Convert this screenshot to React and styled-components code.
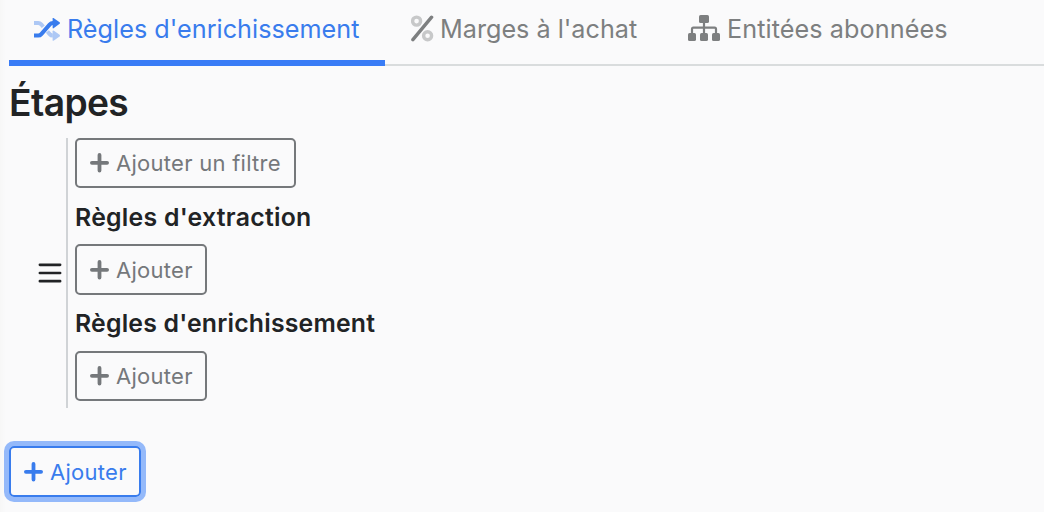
import React from 'react';
import styled, { createGlobalStyle, css } from 'styled-components';

const GlobalStyle = createGlobalStyle`
  *, *::before, *::after { box-sizing: border-box; }
  body {
    margin: 0;
    background: #fafafb;
    color: #212325;
    font-family: Inter, "Liberation Sans", sans-serif;
    -webkit-font-smoothing: antialiased;
  }
`;

const Page = styled.main`
  height: 512px;
  overflow: hidden;
  padding-left: 9px;
  background: linear-gradient(to right, #f7f7f7 0, #fafafb 6px);
`;

const Tabs = styled.nav`
  display: flex;
  height: 66px;
  box-shadow: inset 0 -2px 0 #d9dcdd;
`;

const Tab = styled.a`
  display: flex;
  align-items: center;
  gap: ${(p) => p.$gap}px;
  width: ${(p) => p.$width}px;
  padding: 0 0 2px ${(p) => p.$start}px;
  border-bottom: 6px solid ${(p) => (p.$active ? '#397cf6' : 'transparent')};
  color: ${(p) => (p.$active ? '#397ced' : '#7d7f80')};
  font-size: 25.2px;
  letter-spacing: ${(p) => p.$tracking || 0}px;
  line-height: 38px;
  white-space: nowrap;
`;

const Icon = styled.svg`
  display: block;
  flex: none;
  fill: currentColor;
`;

const TabIcon = styled(Icon)`
  margin-bottom: 2px;
`;

const Title = styled.h2`
  margin: 13px 0 11px;
  font-size: 37.2px;
  font-weight: 600;
  letter-spacing: -0.6px;
  line-height: 48px;
`;

const Step = styled.section`
  display: flex;
  align-items: center;
  height: 270px;
`;

const Handle = styled.span`
  width: 57px;
  padding: 0 0 0 29px;
`;

const StepBody = styled.div`
  display: flex;
  flex-direction: column;
  align-items: flex-start;
  align-self: stretch;
  padding-left: 7px;
  border-left: 2px solid #d0d3d6;
`;

const SubTitle = styled.h5`
  margin: 0;
  padding: ${(p) => (p.$low ? '14px 0 11px' : '13px 0 12px')};
  font-size: 24.8px;
  font-weight: 600;
  letter-spacing: ${(p) => p.$tracking}px;
  line-height: 31px;
  white-space: nowrap;
`;

const Button = styled.button`
  display: flex;
  align-items: center;
  gap: 7px;
  width: ${(p) => p.$width || 132}px;
  height: ${(p) => p.$height || 50}px;
  flex: none;
  padding: 0 0 0 13px;
  border: 2px solid currentColor;
  border-radius: 5px;
  background: transparent;
  color: #75787b;
  font: 400 22px/30px Inter, "Liberation Sans", sans-serif;
  letter-spacing: 0.27px;
  white-space: nowrap;
  ${(p) => p.$primary && css`
    margin-top: 38px;
    color: #397ced;
    box-shadow: 0 0 0 5px #94b9fa;
  `}
`;

const ShuffleIcon = () => (
  <Icon width="26" height="23" viewBox="0 0 26 23">
    <g fill="none" stroke="currentColor" strokeWidth="4">
      <path opacity=".4" d="M0 5H4.2Q6 5 7.2 6.3L9.3 8.7M13.4 13.5L15.7 16.1Q17 17.6 18.6 17.6" />
      <path d="M0 17.6H4.2Q6 17.6 7.3 16.1L15.6 6.6Q17 5 19 5H21" />
    </g>
    <path d="M18.6 .7Q18.6-.7 19.9 .2L25.6 4.2Q26.4 5 25.6 5.8L19.9 10.1Q18.6 10.9 18.6 9.5Z" />
    <path opacity=".4" d="M18.6 13.3Q18.6 11.9 19.9 12.7L25.6 16.8Q26.4 17.6 25.6 18.4L19.9 22.5Q18.6 23.3 18.6 21.9Z" />
  </Icon>
);

const PercentIcon = () => (
  <TabIcon width="23" height="27" viewBox="0 0 23 27">
    <g fill="none" stroke="currentColor">
      <g opacity=".4" strokeWidth="3.4">
        <circle cx="5.6" cy="6.1" r="4" />
        <circle cx="16.6" cy="20.7" r="4" />
      </g>
      <path d="M1.9 24.6L20.6 2.2" strokeWidth="3.4" strokeLinecap="round" />
    </g>
  </TabIcon>
);

const SitemapIcon = () => (
  <TabIcon width="32" height="26" viewBox="0 0 32 26">
    <rect x="11" width="10" height="8" rx="1.6" />
    <rect y="18" width="8" height="8" rx="1.6" />
    <rect x="12" y="18" width="8" height="8" rx="1.6" />
    <rect x="24" y="18" width="8" height="8" rx="1.6" />
    <path d="M16 7V18M4 18V14Q4 12.6 5.4 12.6H26.6Q28 12.6 28 14V18" fill="none" stroke="currentColor" strokeWidth="2.2" />
  </TabIcon>
);

const PlusIcon = () => (
  <Icon width="19" height="20" viewBox="0 0 19 20">
    <path d="M9.5 2V17.6M1.9 9.8H17.1" stroke="currentColor" strokeWidth="3.8" strokeLinecap="round" />
  </Icon>
);

const BurgerIcon = () => (
  <Icon width="24" height="20" viewBox="0 0 24 20">
    <path d="M1.9 1.8H22.1M1.9 10H22.1M1.9 18.2H22.1" stroke="currentColor" strokeWidth="2.7" strokeLinecap="round" />
  </Icon>
);

const AddButton = ({ children = 'Ajouter', ...props }) => (
  <Button type="button" {...props}>
    <PlusIcon />
    <span>{children}</span>
  </Button>
);

export default function App() {
  return (
    <>
      <GlobalStyle />
      <Page>
        <Tabs>
          <Tab $active $width={376} $start={25} $gap={7} $tracking={0.03}>
            <ShuffleIcon />
            <span>Règles d'enrichissement</span>
          </Tab>
          <Tab $width={277} $start={26} $gap={6}>
            <PercentIcon />
            <span>Marges à l'achat</span>
          </Tab>
          <Tab $width={310} $start={26} $gap={7} $tracking={0.08}>
            <SitemapIcon />
            <span>Entitées abonnées</span>
          </Tab>
        </Tabs>
        <Title>Étapes</Title>
        <Step>
          <Handle><BurgerIcon /></Handle>
          <StepBody>
            <AddButton $width={221}>Ajouter un filtre</AddButton>
            <SubTitle $low $tracking={0.27}>Règles d'extraction</SubTitle>
            <AddButton $height={51} />
            <SubTitle $tracking={0.2}>Règles d'enrichissement</SubTitle>
            <AddButton />
          </StepBody>
        </Step>
        <AddButton $primary $height={51} />
      </Page>
    </>
  );
}
